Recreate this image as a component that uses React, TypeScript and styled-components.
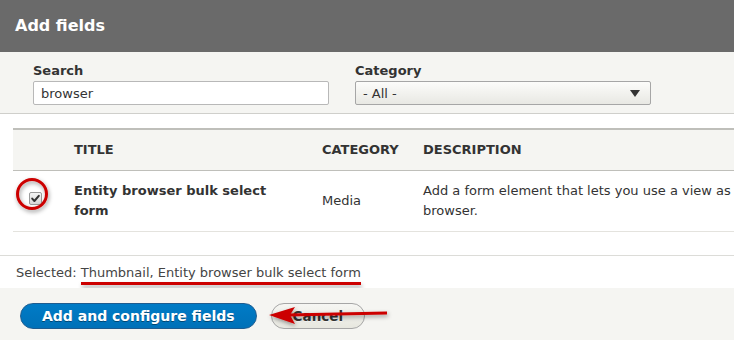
import React from 'react';
import styled, { createGlobalStyle } from 'styled-components';

const GlobalStyle = createGlobalStyle`
    html, body {
        margin: 0;
        padding: 0;
        background: #ffffff;
    }
    body {
        font-family: "DejaVu Sans", "Liberation Sans", sans-serif;
        font-size: 13px;
        color: #333;
    }
`;

const Dialog = styled.div`
    width: 734px;
    height: 340px;
    overflow: hidden;
    display: flex;
    flex-direction: column;
    background: #fff;
`;

const TitleBar = styled.div`
    height: 52px;
    flex: none;
    display: flex;
    align-items: center;
    padding-left: 15px;
    padding-bottom: 2px;
    box-sizing: border-box;
    background: #6a6a6a;
    color: #fff;
    font-weight: bold;
    font-size: 16px;
`;

const Filters = styled.div`
    flex: none;
    display: flex;
    gap: 26px;
    padding: 10px 0 8px 33px;
    background: #f5f5f2;
    border-bottom: 1px solid #cfcfcb;
`;

const Field = styled.div`
    display: flex;
    flex-direction: column;
    gap: 1px;
`;

const Label = styled.label`
    font-weight: bold;
    font-size: 13px;
    line-height: 18px;
    color: #333;
`;

const TextInput = styled.div`
    width: 296px;
    height: 24px;
    box-sizing: border-box;
    border: 1px solid #b8b8b8;
    border-radius: 2px;
    background: #fff;
    padding: 0 7px;
    display: flex;
    align-items: center;
    color: #333;
`;

const Select = styled.div`
    width: 296px;
    height: 24px;
    box-sizing: border-box;
    border: 1px solid #a6a6a6;
    border-radius: 2px;
    background: linear-gradient(to bottom, #fcfcfa, #e8e8e3);
    padding: 0 7px;
    display: flex;
    align-items: center;
    justify-content: space-between;
    color: #333;
`;

const Caret = styled.span`
    width: 0;
    height: 0;
    margin-right: 3px;
    border-left: 5px solid transparent;
    border-right: 5px solid transparent;
    border-top: 7px solid #333;
`;

const Content = styled.div`
    flex: none;
    padding: 14px 0 23px 13px;
    background: #fff;
`;

const Table = styled.table`
    width: 1000px;
    border-collapse: collapse;
    table-layout: fixed;
`;

const Th = styled.th<{ $w?: number }>`
    width: ${p => (p.$w ? `${p.$w}px` : 'auto')};
    box-sizing: border-box;
    text-align: left;
    padding: 11px 12px;
    line-height: 18px;
    font-size: 13px;
    font-weight: bold;
    text-transform: uppercase;
    color: #333;
    background: #f5f5f2;
    border-top: 2px solid #bfbfba;
    border-bottom: 1px solid #bfbfba;
`;

const Td = styled.td<{ $bold?: boolean }>`
    padding: 10px 12px;
    line-height: 20px;
    vertical-align: middle;
    font-weight: ${p => (p.$bold ? 'bold' : 'normal')};
    color: #333;
    border-bottom: 1px solid #e4e3de;
`;

const CheckCell = styled.td`
    position: relative;
    padding: 0 0 6px 16px;
    vertical-align: middle;
    border-bottom: 1px solid #e4e3de;
`;

const Checkbox = styled.span`
    position: relative;
    display: block;
    width: 11px;
    height: 11px;
    border: 1px solid #9a9a9a;
    border-radius: 2px;
    background: linear-gradient(to bottom, #f4f4f4, #d8d8d8);
`;

const Ring = styled.svg`
    position: absolute;
    left: 3px;
    top: 7px;
    overflow: visible;
    pointer-events: none;
`;

const SelectedBar = styled.div`
    flex: none;
    height: 32px;
    display: flex;
    align-items: center;
    padding-left: 16px;
    border-top: 1px solid #dcdcd8;
    color: #444;
    background: #fff;
`;

const Underlined = styled.span`
    position: relative;
    margin-left: 4px;
    &::after {
        content: '';
        position: absolute;
        left: 0;
        right: 0;
        bottom: -5px;
        height: 3px;
        background: #cc0000;
        box-shadow: 1px 3px 4px rgba(0, 0, 0, 0.35);
    }
`;

const Footer = styled.div`
    position: relative;
    flex: 1;
    display: flex;
    align-items: flex-start;
    gap: 14px;
    padding: 15px 0 0 20px;
    background: #f5f5f2;
`;

const Button = styled.button<{ $primary?: boolean }>`
    height: 26px;
    box-sizing: border-box;
    padding: 0 ${p => (p.$primary ? '21px' : '21px')};
    border-radius: 20em;
    font-family: "DejaVu Sans", "Liberation Sans", sans-serif;
    font-size: ${p => (p.$primary ? '14px' : '13.5px')};
    font-weight: bold;
    cursor: pointer;
    border: 1px solid ${p => (p.$primary ? '#1e5c90' : '#a6a6a6')};
    color: ${p => (p.$primary ? '#fff' : '#333')};
    background: ${p =>
        p.$primary
            ? 'linear-gradient(to bottom, #007bc6, #0071b8)'
            : 'linear-gradient(to bottom, #f6f6f3, #e7e7df)'};
    text-shadow: ${p => (p.$primary ? '0 1px rgba(0,0,0,0.4)' : '0 1px rgba(255,255,255,0.6)')};
`;

const Arrow = styled.svg`
    position: absolute;
    left: 262px;
    top: 12px;
    overflow: visible;
    pointer-events: none;
`;

export default function App() {
    return (
        <>
            <GlobalStyle />
            <Dialog>
                <TitleBar>Add fields</TitleBar>
                <Filters>
                    <Field>
                        <Label>Search</Label>
                        <TextInput>browser</TextInput>
                    </Field>
                    <Field>
                        <Label>Category</Label>
                        <Select>
                            <span>- All -</span>
                            <Caret />
                        </Select>
                    </Field>
                </Filters>
                <Content>
                    <Table>
                        <thead>
                            <tr>
                                <Th $w={49}></Th>
                                <Th $w={248}>Title</Th>
                                <Th $w={101}>Category</Th>
                                <Th>Description</Th>
                            </tr>
                        </thead>
                        <tbody>
                            <tr>
                                <CheckCell>
                                    <Checkbox>
                                        <svg width="11" height="11" viewBox="0 0 11 11" style={{ position: 'absolute', left: 0, top: 0 }}>
                                            <path d="M2.2 5.6 L4.4 8 L8.8 2.8" fill="none" stroke="#333" strokeWidth="2" strokeLinecap="round" strokeLinejoin="round" />
                                        </svg>
                                    </Checkbox>
                                    <Ring width="32" height="32" viewBox="0 0 32 32">
                                        <defs>
                                            <filter id="shadow1" x="-50%" y="-50%" width="200%" height="200%">
                                                <feDropShadow dx="1" dy="2" stdDeviation="2" floodColor="#000" floodOpacity="0.4" />
                                            </filter>
                                        </defs>
                                        <circle cx="16" cy="16" r="14.5" fill="none" stroke="#cc0000" strokeWidth="3" filter="url(#shadow1)" />
                                    </Ring>
                                </CheckCell>
                                <Td $bold>Entity browser bulk select form</Td>
                                <Td>Media</Td>
                                <Td>
                                    Add a form element that lets you use a view as a bulk select form in entity
                                    <br />
                                    browser.
                                </Td>
                            </tr>
                        </tbody>
                    </Table>
                </Content>
                <SelectedBar>
                    Selected:<Underlined>Thumbnail, Entity browser bulk select form</Underlined>
                </SelectedBar>
                <Footer>
                    <Button $primary>Add and configure fields</Button>
                    <Button>Cancel</Button>
                    <Arrow width="130" height="30" viewBox="0 0 130 30">
                        <defs>
                            <filter id="shadow2" x="-20%" y="-80%" width="140%" height="260%">
                                <feDropShadow dx="1" dy="2" stdDeviation="2" floodColor="#000" floodOpacity="0.4" />
                            </filter>
                        </defs>
                        <g filter="url(#shadow2)">
                            <line x1="26" y1="15" x2="125" y2="13" stroke="#cc0000" strokeWidth="3" />
                            <polygon points="7,15 33,7 28,15 33,24" fill="#cc0000" />
                        </g>
                    </Arrow>
                </Footer>
            </Dialog>
        </>
    );
}
